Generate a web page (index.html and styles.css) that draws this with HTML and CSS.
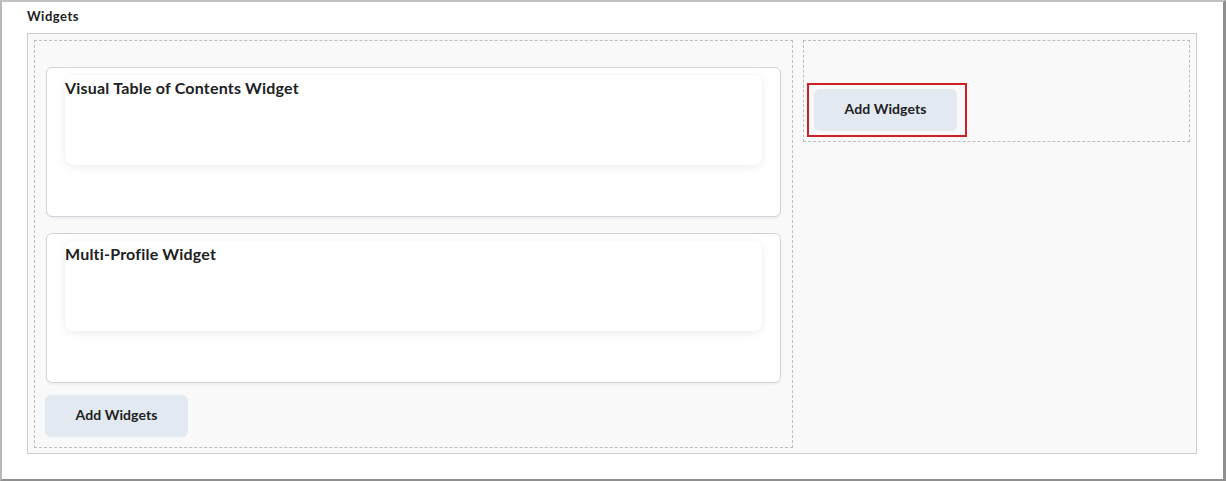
FILE: index.html
```html
<!DOCTYPE html>
<html>
<head>
<meta charset="utf-8">
<link rel="stylesheet" href="styles.css">
</head>
<body>
<div class="frame">
  <div class="section-label">Widgets</div>
  <div class="layout">
    <div class="column column-main">
      <div class="widget-card">
        <div class="widget-inner">
          <h2 class="widget-title">Visual Table of Contents Widget</h2>
        </div>
      </div>
      <div class="widget-card">
        <div class="widget-inner">
          <h2 class="widget-title">Multi-Profile Widget</h2>
        </div>
      </div>
      <button class="add-btn add-btn-main">Add Widgets</button>
    </div>
    <div class="column column-side">
      <div class="highlight">
        <button class="add-btn">Add Widgets</button>
      </div>
    </div>
  </div>
</div>
</body>
</html>
```

FILE: styles.css
```css
* { box-sizing: border-box; }
html, body {
  margin: 0;
  padding: 0;
  background: #ffffff;
}
body {
  font-family: Lato, "Open Sans", "Liberation Sans", sans-serif;
  color: #202122;
}
.frame {
  width: 1226px;
  height: 481px;
  border-style: solid;
  border-width: 2px 3px 2px 2px;
  border-color: #c2c2c2 #8f8f8f #8f8f8f #b8b8b8;
  padding: 5px 26px 0 25px;
}
.section-label {
  font-size: 13px;
  font-weight: 700;
  letter-spacing: 0.5px;
  line-height: 16px;
  height: 26px;
  padding-top: 1px;
}
.layout {
  display: grid;
  grid-template-columns: 759px 387px;
  column-gap: 10px;
  align-items: start;
  background: #f9f9f9;
  border: 1px solid #cdcdcd;
  padding: 6px;
  height: 421px;
}
.column {
  border: 1px dashed #bdbdbd;
}
.column-main {
  height: 408px;
  padding: 26px 12px 10px 11px;
  display: flex;
  flex-direction: column;
  align-items: flex-start;
}
.column-side {
  height: 102px;
  padding: 42px 3px 3px 3px;
}
.widget-card {
  width: 735px;
  height: 150px;
  background: #ffffff;
  border: 1px solid #cdd4dc;
  border-radius: 6px;
  box-shadow: 0 2px 2px rgba(0, 0, 0, 0.04);
  padding: 7px 18px 0 18px;
  margin-bottom: 16px;
}
.widget-inner {
  height: 90px;
  background: #ffffff;
  border-radius: 8px;
  box-shadow: 0 2px 8px rgba(0, 0, 0, 0.08);
  padding-top: 3px;
}
.widget-title {
  margin: 0;
  font-size: 16px;
  font-weight: 700;
  letter-spacing: 0.2px;
  line-height: 20px;
  color: #202122;
}
.add-btn {
  display: block;
  width: 143px;
  height: 42px;
  border: none;
  border-radius: 6px;
  background: #e3e9f1;
  font-family: Lato, "Open Sans", "Liberation Sans", sans-serif;
  font-size: 14px;
  font-weight: 700;
  letter-spacing: 0.1px;
  color: #202122;
  padding: 0 0 3px 0;
}
.add-btn-main {
  margin-top: -4px;
  margin-left: -1px;
}
.highlight {
  display: inline-block;
  width: 160px;
  height: 54px;
  border: 2px solid #cd1f26;
  padding: 4px 8px 4px 5px;
}
```
